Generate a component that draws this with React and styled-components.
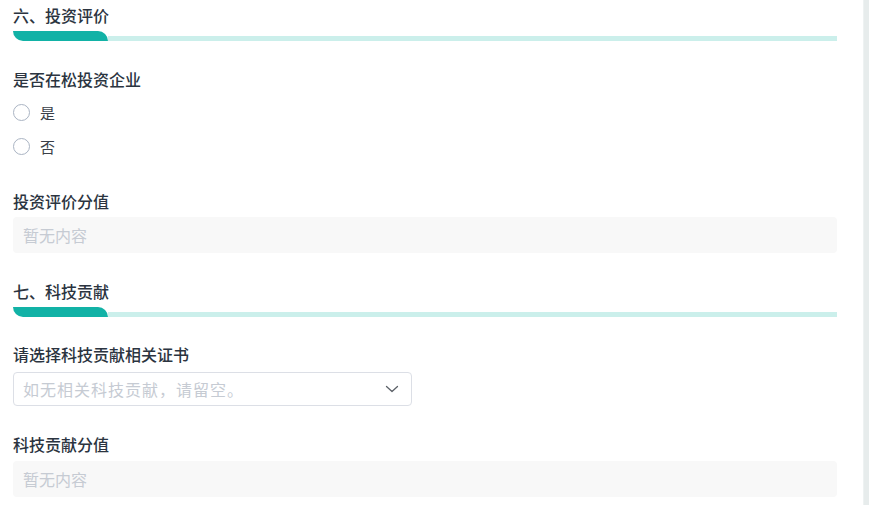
import React from 'react';
import styled, { createGlobalStyle } from 'styled-components';

const GlobalStyle = createGlobalStyle`
  html, body {
    margin: 0;
    padding: 0;
    background: #fff;
  }
  body {
    font-family: "Noto Sans CJK SC", "Noto Sans", sans-serif;
  }
`;

const Page = styled.div`
  display: flex;
  height: 505px;
  overflow: hidden;
`;

const Content = styled.div`
  flex: 1;
  padding: 4px 26px 0 13px;
  background: #fff;
`;

const Scrollbar = styled.div`
  width: 5px;
  background: #e7ecec;
  border-left: 1px solid #eef2f2;
`;

const SectionTitle = styled.div`
  font-size: 16px;
  line-height: 22px;
  font-weight: 500;
  color: #2b3440;
`;

const Bar = styled.div`
  height: 10px;
  margin-top: 5px;
  display: flex;
  align-items: flex-end;

  &::before {
    content: '';
    width: 95px;
    height: 10px;
    background: #12b2a6;
    border-radius: 0 10px 0 10px;
    flex-shrink: 0;
  }
  &::after {
    content: '';
    flex: 1;
    height: 5px;
    background: #cbefeb;
  }
`;

const Field = styled.div`
  margin-top: ${p => p.gap || 27}px;
`;

const Label = styled.div`
  font-size: 16px;
  line-height: 22px;
  font-weight: 500;
  color: #2b3440;
  margin-bottom: ${p => p.mb || 5}px;
`;

const RadioRow = styled.label`
  display: flex;
  align-items: center;
  height: 34px;
  font-size: 15px;
  color: #3a3f48;
  cursor: pointer;
`;

const RadioCircle = styled.span`
  width: 17px;
  height: 17px;
  border-radius: 50%;
  border: 1px solid #aab4c3;
  box-sizing: border-box;
  margin-right: 10px;
  flex-shrink: 0;
`;

const Readonly = styled.div`
  height: 36px;
  background: #f8f8f8;
  border-radius: 4px;
  display: flex;
  align-items: center;
  padding: 0 10px;
  font-size: 16px;
  color: #c6cbd3;
`;

const Select = styled.div`
  width: 399px;
  height: 34px;
  box-sizing: border-box;
  border: 1px solid #dcdfe6;
  border-radius: 4px;
  display: flex;
  align-items: center;
  justify-content: space-between;
  padding: 0 12px 0 9px;
  font-size: 16px;
  letter-spacing: 1px;
  color: #c6cbd3;
`;

const Chevron = () => (
  <svg width="14" height="14" viewBox="0 0 14 14" fill="none">
    <path d="M1.5 4.5 L7 9.5 L12.5 4.5" stroke="#5c6168" strokeWidth="1.3" strokeLinecap="round" strokeLinejoin="round" />
  </svg>
);

const Section = ({ title, children }) => (
  <>
    <SectionTitle>{title}</SectionTitle>
    <Bar />
    {children}
  </>
);

export default function App() {
  return (
    <Page>
      <GlobalStyle />
      <Content>
        <Section title="六、投资评价">
          <Field>
            <Label>是否在松投资企业</Label>
            <RadioRow><RadioCircle />是</RadioRow>
            <RadioRow><RadioCircle />否</RadioRow>
          </Field>
          <Field>
            <Label>投资评价分值</Label>
            <Readonly>暂无内容</Readonly>
          </Field>
        </Section>
        <Field>
          <Section title="七、科技贡献">
            <Field gap={26}>
              <Label mb={7}>请选择科技贡献相关证书</Label>
              <Select>
                <span>如无相关科技贡献，请留空。</span>
                <Chevron />
              </Select>
            </Field>
            <Field>
              <Label mb={6}>科技贡献分值</Label>
              <Readonly>暂无内容</Readonly>
            </Field>
          </Section>
        </Field>
      </Content>
      <Scrollbar />
    </Page>
  );
}
